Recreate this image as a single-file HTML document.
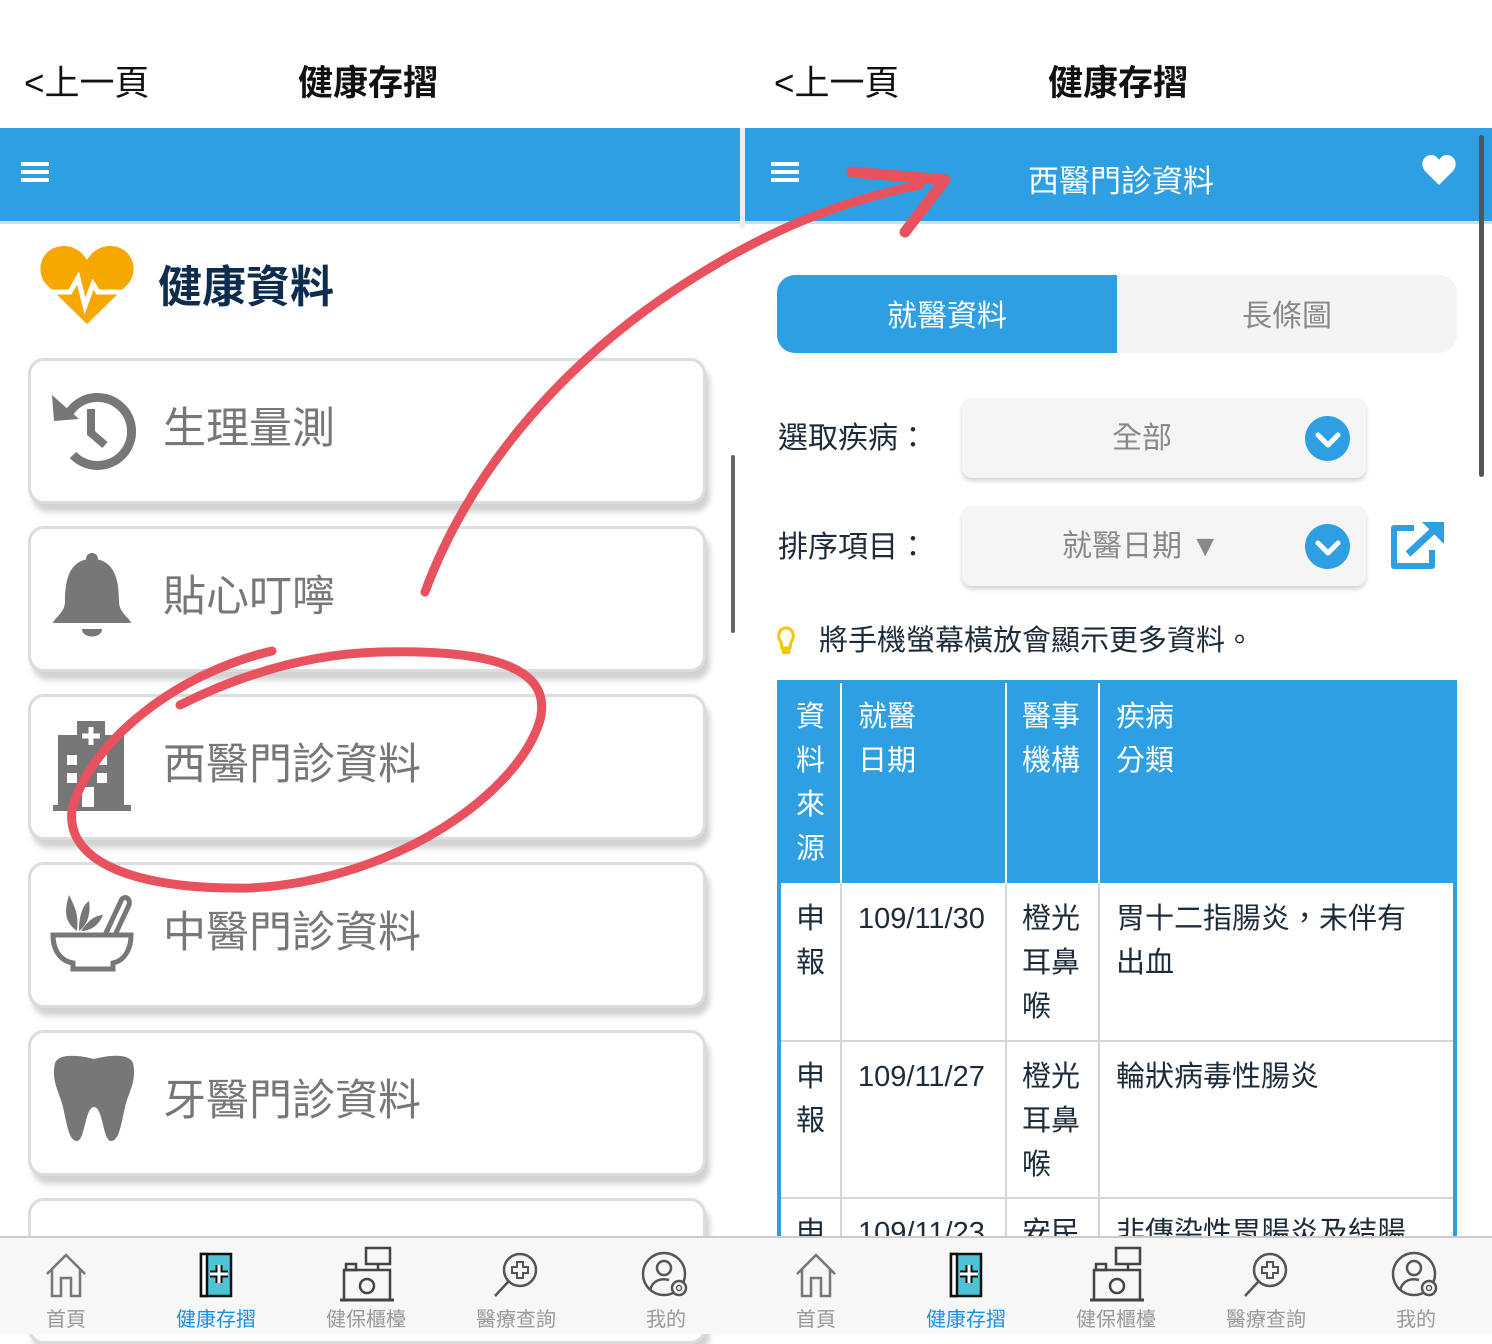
<!DOCTYPE html>
<html><head><meta charset="utf-8"><style>
*{margin:0;padding:0;box-sizing:border-box}
body{width:1492px;height:1334px;overflow:hidden;background:#fff;position:relative;font-family:"Liberation Sans","Noto Sans CJK TC",sans-serif}
.a{position:absolute}
.t{position:absolute;white-space:nowrap;line-height:1}
.card{position:absolute;left:28px;width:678px;height:146px;border:3px solid #dcdcdc;border-radius:16px;background:#fff;box-shadow:4px 8px 6px rgba(0,0,0,.18)}
.card .l{position:absolute;left:132px;top:47px;font-size:43px;color:#777;line-height:1;white-space:nowrap}
.bar{position:absolute;top:128px;height:96px;background:#2e9fe2;border-bottom:3px solid #d8dde2}
.tab{position:absolute;top:1236px;height:98px;background:#f7f7f7;border-top:2px solid #ccc}
.tab .it{position:absolute;top:0;width:150px;text-align:center}
.tab .lb{position:absolute;top:72px;left:0;width:150px;text-align:center;font-size:20px;color:#999;line-height:1}
.dd{position:absolute;left:962px;width:404px;height:80px;background:#f5f5f5;border-radius:10px;box-shadow:0 3px 5px rgba(0,0,0,.18)}
.dd .v{position:absolute;top:26px;font-size:30px;color:#888;line-height:1;white-space:nowrap}
.dd .c{position:absolute;left:343px;top:18px;width:45px;height:45px;border-radius:50%;background:#2e9fe2}
.tb{position:absolute;font-size:29px;line-height:44px;color:#1d2b3a}
.hd{color:#fff}
</style></head><body>

<!-- LEFT -->
<div class="t" style="left:24px;top:66px;font-size:35px;color:#111">&lt;上一頁</div>
<div class="t" style="left:298px;top:66px;font-size:35px;color:#111;font-weight:bold">健康存摺</div>
<div class="bar" style="left:0;width:740px"></div>
<div class="a" style="left:21px;top:162px;width:28px;height:4px;background:#fff;box-shadow:0 8px 0 #fff,0 16px 0 #fff"></div>
<div class="a" style="left:740px;top:128px;width:5px;height:100px;background:#e8eef3"></div>

<svg class="a" style="left:40px;top:244px" width="94" height="82" viewBox="0 0 94 82"><path d="M47 80 L6 40 C-6 26 2 2 24 2 C35 2 43 9 47 16 C51 9 59 2 70 2 C92 2 100 26 88 40 Z" fill="#f6a800"/><path d="M6 48 H30 L38 34 L45 62 L53 40 L58 48 H88" stroke="#fff" stroke-width="5" fill="none"/></svg>
<div class="t" style="left:158px;top:266px;font-size:44px;color:#0e2d4e;font-weight:bold">健康資料</div>

<div class="card" style="top:358px"><svg class="a" style="left:18px;top:22px" width="88" height="88" viewBox="0 0 88 88"><path d="M20 30 A34 34 0 1 1 24 72" stroke="#777" stroke-width="9" fill="none"/><path d="M3 12 L5 38 L30 36 Z" fill="#777"/><path d="M42 26 V50 L56 62" stroke="#777" stroke-width="8" fill="none"/></svg><div class="l">生理量測</div></div>
<div class="card" style="top:526px"><svg class="a" style="left:20px;top:22px" width="82" height="92" viewBox="0 0 82 92"><circle cx="41" cy="8" r="6" fill="#777"/><path d="M41 8 C18 8 14 30 14 50 C14 62 4 66 2 72 H80 C78 66 68 62 68 50 C68 30 64 8 41 8Z" fill="#777"/><path d="M31 78 H51 C51 88 31 88 31 78Z" fill="#777"/></svg><div class="l">貼心叮嚀</div></div>
<div class="card" style="top:694px"><svg class="a" style="left:22px;top:22px" width="80" height="92" viewBox="0 0 80 92"><rect x="5" y="16" width="66" height="74" fill="#777"/><rect x="24" y="2" width="28" height="30" fill="#777"/><path d="M38 8 V26 M29 17 H47" stroke="#fff" stroke-width="5"/><rect x="0" y="86" width="78" height="6" fill="#777"/><rect x="14" y="36" width="10" height="10" fill="#fff"/><rect x="44" y="36" width="10" height="10" fill="#fff"/><rect x="14" y="54" width="10" height="10" fill="#fff"/><rect x="44" y="54" width="10" height="10" fill="#fff"/><rect x="29" y="68" width="12" height="20" fill="#fff"/></svg><div class="l">西醫門診資料</div></div>
<div class="card" style="top:862px"><svg class="a" style="left:18px;top:20px" width="86" height="90" viewBox="0 0 86 90"><path d="M4 50 H82 C82 66 74 76 64 78 V84 H24 V78 C12 76 4 66 4 50Z" stroke="#777" stroke-width="5" fill="none"/><path d="M56 50 L72 16 C74 10 82 12 80 20 L66 50" stroke="#777" stroke-width="5" fill="none"/><path d="M28 46 C14 36 16 24 20 10 C26 22 30 30 28 46Z M30 46 C30 30 34 20 40 16 C42 30 38 40 30 46Z M32 46 C40 34 48 30 54 30 C50 40 42 46 32 46Z" fill="#777"/></svg><div class="l">中醫門診資料</div></div>
<div class="card" style="top:1030px"><svg class="a" style="left:18px;top:18px" width="90" height="92" viewBox="0 0 90 92"><path d="M6 12 C10 2 30 4 45 8 C60 4 80 2 84 12 C88 30 80 40 76 56 C72 74 70 90 62 90 C54 90 54 56 45 56 C36 56 36 90 28 90 C20 90 18 74 14 56 C10 40 2 30 6 12Z" fill="#777"/></svg><div class="l">牙醫門診資料</div></div>
<div class="card" style="top:1198px"></div>
<div class="a" style="left:731px;top:455px;width:4px;height:178px;background:#666;border-radius:2px"></div>

<!-- RIGHT -->
<div class="t" style="left:774px;top:66px;font-size:35px;color:#111">&lt;上一頁</div>
<div class="t" style="left:1048px;top:66px;font-size:35px;color:#111;font-weight:bold">健康存摺</div>
<div class="bar" style="left:745px;width:747px"></div>
<div class="a" style="left:771px;top:162px;width:28px;height:4px;background:#fff;box-shadow:0 8px 0 #fff,0 16px 0 #fff"></div>
<div class="t" style="left:1028px;top:166px;font-size:31px;color:#fff">西醫門診資料</div>
<svg class="a" style="left:1422px;top:154px" width="34" height="32" viewBox="0 0 34 32"><path d="M17 31 L3 17 C-3 10 2 1 9 1 C13 1 15 3 17 6 C19 3 21 1 25 1 C32 1 37 10 31 17Z" fill="#fff"/></svg>
<div class="a" style="left:1479px;top:135px;width:5px;height:342px;background:#555;border-radius:3px"></div>

<div class="a" style="left:777px;top:275px;width:680px;height:78px;background:#f4f4f4;border-radius:18px;overflow:hidden"><div class="a" style="left:0;top:0;width:340px;height:78px;background:#2e9fe2"></div></div>
<div class="t" style="left:887px;top:302px;font-size:30px;color:#fff">就醫資料</div>
<div class="t" style="left:1242px;top:302px;font-size:30px;color:#888">長條圖</div>

<div class="t" style="left:778px;top:424px;font-size:30px;color:#1d2b3a">選取疾病：</div>
<div class="dd" style="top:398px"><div class="v" style="left:150px">全部</div><div class="c"></div></div>
<div class="t" style="left:778px;top:533px;font-size:30px;color:#1d2b3a">排序項目：</div>
<div class="dd" style="top:506px"><div class="v" style="left:100px">就醫日期 ▼</div><div class="c"></div></div>
<svg class="a" style="left:1305px;top:416px" width="48" height="180" viewBox="0 0 48 180"><path d="M13 19 L23 29 L33 19" stroke="#fff" stroke-width="5" fill="none" stroke-linecap="round" stroke-linejoin="round"/><path d="M13 127 L23 137 L33 127" stroke="#fff" stroke-width="5" fill="none" stroke-linecap="round" stroke-linejoin="round"/></svg>
<svg class="a" style="left:1388px;top:520px" width="58" height="50" viewBox="0 0 58 50"><path d="M26 8 H6 V46 H44 V30" stroke="#2e9fe2" stroke-width="6" fill="none" stroke-linejoin="round"/><path d="M20 34 L48 8" stroke="#2e9fe2" stroke-width="7"/><path d="M34 2 H56 V24 Z" fill="#2e9fe2"/></svg>

<svg class="a" style="left:776px;top:626px" width="20" height="30" viewBox="0 0 20 30"><path d="M10 2 C2 2 1 12 5 16 L6 22 H14 L15 16 C19 12 18 2 10 2Z" fill="none" stroke="#f3c800" stroke-width="3"/><rect x="6" y="23" width="8" height="5" fill="#f3c800"/></svg>
<div class="t" style="left:819px;top:627px;font-size:29px;color:#1d2b3a">將手機螢幕橫放會顯示更多資料。</div>

<!-- table -->
<div class="a" style="left:777px;top:680px;width:680px;height:560px;background:#fff;border-left:4px solid #2e9fe2;border-right:4px solid #2e9fe2"></div>
<div class="a" style="left:777px;top:680px;width:680px;height:203px;background:#2e9fe2"></div>
<div class="a" style="left:840px;top:683px;width:2px;height:560px;background:#d6d6d6"></div>
<div class="a" style="left:1005px;top:683px;width:2px;height:560px;background:#d6d6d6"></div>
<div class="a" style="left:1098px;top:683px;width:2px;height:560px;background:#d6d6d6"></div>
<div class="a" style="left:840px;top:683px;width:2px;height:200px;background:#fff"></div>
<div class="a" style="left:1005px;top:683px;width:2px;height:200px;background:#fff"></div>
<div class="a" style="left:1098px;top:683px;width:2px;height:200px;background:#fff"></div>
<div class="a" style="left:781px;top:1040px;width:672px;height:2px;background:#d6d6d6"></div>
<div class="a" style="left:781px;top:1197px;width:672px;height:2px;background:#d6d6d6"></div>

<div class="tb hd" style="left:796px;top:695px">資<br>料<br>來<br>源</div>
<div class="tb hd" style="left:858px;top:695px">就醫<br>日期</div>
<div class="tb hd" style="left:1022px;top:695px">醫事<br>機構</div>
<div class="tb hd" style="left:1116px;top:695px">疾病<br>分類</div>

<div class="tb" style="left:796px;top:897px">申<br>報</div>
<div class="tb" style="left:858px;top:897px">109/11/30</div>
<div class="tb" style="left:1022px;top:897px">橙光<br>耳鼻<br>喉</div>
<div class="tb" style="left:1116px;top:897px">胃十二指腸炎，未伴有<br>出血</div>
<div class="tb" style="left:796px;top:1055px">申<br>報</div>
<div class="tb" style="left:858px;top:1055px">109/11/27</div>
<div class="tb" style="left:1022px;top:1055px">橙光<br>耳鼻<br>喉</div>
<div class="tb" style="left:1116px;top:1055px">輪狀病毒性腸炎</div>
<div class="tb" style="left:796px;top:1211px">申</div>
<div class="tb" style="left:858px;top:1211px">109/11/23</div>
<div class="tb" style="left:1022px;top:1211px">安民</div>
<div class="tb" style="left:1116px;top:1211px">非傳染性胃腸炎及結腸</div>

<!-- tab bars -->
<div class="tab" style="left:0;width:746px">
 <div class="it" style="left:-9px"><svg style="margin-top:14px" width="46" height="46" viewBox="0 0 46 46"><path d="M4 22 L23 3 L42 22 M9 17 V44 H18 V26 H28 V44 H37 V17" stroke="#777" stroke-width="2.5" fill="none"/></svg><div class="lb">首頁</div></div>
 <div class="it" style="left:141px"><svg style="margin-top:14px" width="36" height="46" viewBox="0 0 36 46"><rect x="3" y="2" width="30" height="42" fill="#4fc3d6" stroke="#111" stroke-width="2.5"/><rect x="3" y="2" width="6" height="42" fill="#fff" stroke="#111" stroke-width="2.5"/><path d="M21 13 V31 M12 22 H30" stroke="#111" stroke-width="7"/><path d="M21 13 V31 M12 22 H30" stroke="#fff" stroke-width="3"/></svg><div class="lb" style="color:#1a8fe0">健康存摺</div></div>
 <div class="it" style="left:291px"><svg style="margin-top:8px" width="56" height="56" viewBox="0 0 56 56"><rect x="28" y="2" width="24" height="16" fill="none" stroke="#444" stroke-width="2.5"/><path d="M40 18 V24" stroke="#444" stroke-width="2.5"/><rect x="6" y="24" width="46" height="30" fill="none" stroke="#444" stroke-width="2.5"/><rect x="8" y="18" width="10" height="6" fill="none" stroke="#444" stroke-width="2.5"/><circle cx="29" cy="40" r="7" fill="none" stroke="#444" stroke-width="2.5"/><path d="M2 54 H56" stroke="#444" stroke-width="3"/></svg><div class="lb">健保櫃檯</div></div>
 <div class="it" style="left:441px"><svg style="margin-top:12px" width="50" height="50" viewBox="0 0 50 50"><circle cx="29" cy="20" r="16" fill="none" stroke="#555" stroke-width="2.5"/><path d="M17 32 L4 46" stroke="#555" stroke-width="2.5"/><path d="M26 12 H32 V17 H37 V23 H32 V28 H26 V23 H21 V17 H26Z" fill="none" stroke="#555" stroke-width="2"/></svg><div class="lb">醫療查詢</div></div>
 <div class="it" style="left:591px"><svg style="margin-top:12px" width="50" height="50" viewBox="0 0 50 50"><circle cx="23" cy="24" r="21" fill="none" stroke="#555" stroke-width="2.5"/><circle cx="23" cy="18" r="7" fill="none" stroke="#555" stroke-width="2.5"/><path d="M9 40 C12 30 20 28 28 30" fill="none" stroke="#555" stroke-width="2.5"/><circle cx="38" cy="38" r="7" fill="#f7f7f7" stroke="#555" stroke-width="2.5"/><circle cx="38" cy="38" r="2.5" fill="none" stroke="#555" stroke-width="1.5"/></svg><div class="lb">我的</div></div>
</div>
<div class="tab" style="left:746px;width:746px">
 <div class="it" style="left:-5px"><svg style="margin-top:14px" width="46" height="46" viewBox="0 0 46 46"><path d="M4 22 L23 3 L42 22 M9 17 V44 H18 V26 H28 V44 H37 V17" stroke="#777" stroke-width="2.5" fill="none"/></svg><div class="lb">首頁</div></div>
 <div class="it" style="left:145px"><svg style="margin-top:14px" width="36" height="46" viewBox="0 0 36 46"><rect x="3" y="2" width="30" height="42" fill="#4fc3d6" stroke="#111" stroke-width="2.5"/><rect x="3" y="2" width="6" height="42" fill="#fff" stroke="#111" stroke-width="2.5"/><path d="M21 13 V31 M12 22 H30" stroke="#111" stroke-width="7"/><path d="M21 13 V31 M12 22 H30" stroke="#fff" stroke-width="3"/></svg><div class="lb" style="color:#1a8fe0">健康存摺</div></div>
 <div class="it" style="left:295px"><svg style="margin-top:8px" width="56" height="56" viewBox="0 0 56 56"><rect x="28" y="2" width="24" height="16" fill="none" stroke="#444" stroke-width="2.5"/><path d="M40 18 V24" stroke="#444" stroke-width="2.5"/><rect x="6" y="24" width="46" height="30" fill="none" stroke="#444" stroke-width="2.5"/><rect x="8" y="18" width="10" height="6" fill="none" stroke="#444" stroke-width="2.5"/><circle cx="29" cy="40" r="7" fill="none" stroke="#444" stroke-width="2.5"/><path d="M2 54 H56" stroke="#444" stroke-width="3"/></svg><div class="lb">健保櫃檯</div></div>
 <div class="it" style="left:445px"><svg style="margin-top:12px" width="50" height="50" viewBox="0 0 50 50"><circle cx="29" cy="20" r="16" fill="none" stroke="#555" stroke-width="2.5"/><path d="M17 32 L4 46" stroke="#555" stroke-width="2.5"/><path d="M26 12 H32 V17 H37 V23 H32 V28 H26 V23 H21 V17 H26Z" fill="none" stroke="#555" stroke-width="2"/></svg><div class="lb">醫療查詢</div></div>
 <div class="it" style="left:595px"><svg style="margin-top:12px" width="50" height="50" viewBox="0 0 50 50"><circle cx="23" cy="24" r="21" fill="none" stroke="#555" stroke-width="2.5"/><circle cx="23" cy="18" r="7" fill="none" stroke="#555" stroke-width="2.5"/><path d="M9 40 C12 30 20 28 28 30" fill="none" stroke="#555" stroke-width="2.5"/><circle cx="38" cy="38" r="7" fill="#f7f7f7" stroke="#555" stroke-width="2.5"/><circle cx="38" cy="38" r="2.5" fill="none" stroke="#555" stroke-width="1.5"/></svg><div class="lb">我的</div></div>
</div>

<!-- red annotation -->
<svg class="a" style="left:0;top:0" width="1492" height="1334" viewBox="0 0 1492 1334">
<g stroke="#e8525e" fill="none" stroke-linecap="round" stroke-linejoin="round">
<path d="M425 592 C470 470 560 370 660 300 C740 245 820 205 920 185" stroke-width="9"/>
<path d="M852 172 L945 180 L905 232" stroke-width="11"/>
<path d="M272 651 C180 672 90 740 72 810 C66 860 130 890 250 888 C400 880 520 790 540 720 C555 660 470 650 380 652 C300 654 230 680 180 705" stroke-width="9"/>
</g>
</svg>
</body></html>
